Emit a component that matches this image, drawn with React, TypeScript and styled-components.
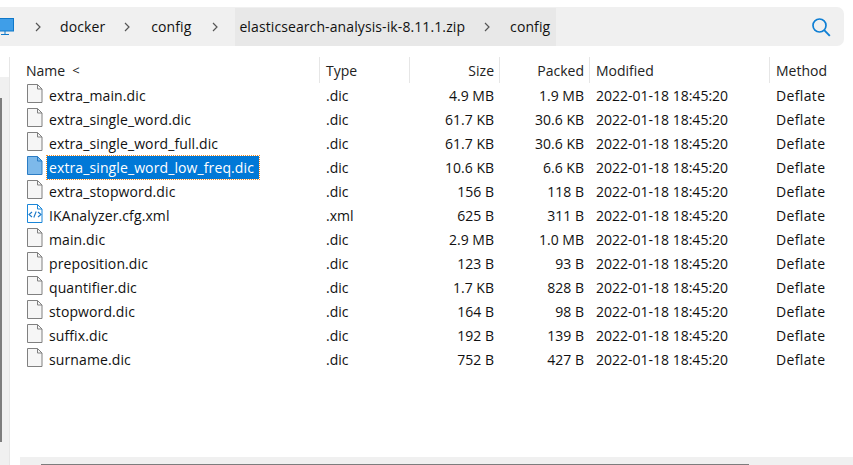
import React from "react";
import styled, { createGlobalStyle } from "styled-components";

const GlobalStyle = createGlobalStyle`
  html, body {
    margin: 0;
    padding: 0;
    background: #fff;
    overflow: hidden;
  }
`;

const Window = styled.div`
  width: 853px;
  height: 465px;
  display: flex;
  flex-direction: column;
  overflow: hidden;
  color: #111;
  font-family: "Open Sans", "Noto Sans", sans-serif;
  font-size: 14px;
`;

const AddressBar = styled.div`
  flex: none;
  width: 844px;
  height: 39px;
  margin-top: 7px;
  display: flex;
  align-items: center;
  background: #f0f0f0;
  border-radius: 0 7px 7px 0;
  overflow: hidden;
`;

const PcIcon = styled.svg`
  flex: none;
  margin-left: -4px;
`;

const Crumb = styled.span`
  white-space: nowrap;
  letter-spacing: 0.1px;
`;

const Chevron = styled.svg<{ $left: number; $right: number }>`
  flex: none;
  margin-left: ${({ $left }) => $left}px;
  margin-right: ${({ $right }) => $right}px;
`;

const ActiveCrumbs = styled.div`
  height: 38px;
  display: flex;
  align-items: center;
  padding: 0 6px 0 4px;
  background: #e8e8e8;
`;

const SearchButton = styled.svg`
  flex: none;
  margin-left: auto;
  margin-right: 13px;
`;

const Body = styled.div`
  flex: 1;
  display: flex;
  margin-top: 11px;
  min-height: 0;
`;

const Sidebar = styled.div`
  flex: none;
  width: 9px;
  padding-top: 20px;
  border-right: 1px solid #e6e6e6;
`;

const SideTrack = styled.div`
  height: 100%;
  padding-top: 21px;
  background: #f0f0f0;
`;

const SideThumb = styled.div`
  width: 2px;
  height: 344px;
  background: #7d7d7d;
`;

const Main = styled.div`
  flex: 1;
  min-width: 0;
  display: flex;
  flex-direction: column;
`;

const List = styled.div`
  flex: 1;
`;

const columns = "310px 90px 90px 90px 180px 83px";

const HeaderRow = styled.div`
  display: grid;
  grid-template-columns: ${columns};
  height: 26px;
`;

const HeaderCell = styled.div<{ $right?: boolean; $first?: boolean }>`
  display: flex;
  align-items: center;
  justify-content: ${({ $right }) => ($right ? "flex-end" : "flex-start")};
  padding: ${({ $first, $right }) =>
    $first ? "0 0 0 16px" : $right ? "0 5px 0 0" : "0 0 0 6px"};
  border-right: 1px solid #e6e6e6;
  color: #222;
  &:last-child {
    border-right: none;
  }
`;

const SortMark = styled.span`
  margin-left: 7px;
  font-size: 13px;
`;

const Row = styled.div`
  display: grid;
  grid-template-columns: ${columns};
  height: 24px;
  align-items: center;
`;

const NameCell = styled.div`
  display: flex;
  align-items: center;
  padding-left: 17px;
`;

const IconSvg = styled.svg`
  flex: none;
  margin-bottom: 4px;
`;

const FileName = styled.span<{ $selected?: boolean }>`
  margin-left: ${({ $selected }) => ($selected ? "4px" : "6px")};
  padding: ${({ $selected }) => ($selected ? "0 5px 0 2px" : "0")};
  height: ${({ $selected }) => ($selected ? "23px" : "auto")};
  line-height: ${({ $selected }) => ($selected ? "23px" : "normal")};
  white-space: nowrap;
  letter-spacing: 0.11px;
  color: ${({ $selected }) => ($selected ? "#fff" : "inherit")};
  background: ${({ $selected }) => ($selected ? "#0078d7" : "transparent")};
  outline: ${({ $selected }) => ($selected ? "1px dotted #f08a24" : "none")};
`;

const Cell = styled.div<{ $right?: boolean; $wide?: boolean }>`
  padding: ${({ $right }) => ($right ? "0 6px 0 0" : "0 0 0 6px")};
  text-align: ${({ $right }) => ($right ? "right" : "left")};
  white-space: nowrap;
  letter-spacing: ${({ $wide }) => ($wide ? "0.35px" : "normal")};
`;

const BottomTrack = styled.div`
  flex: none;
  height: 8px;
  margin-left: 10px;
  padding: 7px 0 0 21px;
  box-sizing: border-box;
  background: #f0f0f0;
`;

const BottomThumb = styled.div`
  width: 708px;
  height: 1px;
  background: #7d7d7d;
`;

type FileKind = "plain" | "selected" | "xml";

const FileIcon = ({ kind }: { kind: FileKind }) => {
  const stroke = kind === "plain" ? "#808080" : kind === "selected" ? "#2b7cc4" : "#1a86d8";
  const fill = kind === "plain" ? "#f6f6f6" : kind === "selected" ? "#7db9ea" : "#fff";
  return (
    <IconSvg width="16" height="19" viewBox="0 0 16 19">
      <path
        d="M.5 .5h10l4.5 4.5v13.5H.5z"
        fill={fill}
        stroke={stroke}
        strokeWidth="1"
      />
      <path d="M10.5 .5v4.5H15" fill="none" stroke={stroke} strokeWidth="1" />
      {kind === "xml" && (
        <path
          d="M5 8 2 10.5 5 13M11 8l3 2.5-3 2.5M9.2 7.5l-2.4 6"
          fill="none"
          stroke="#1a78c8"
          strokeWidth="1.1"
        />
      )}
    </IconSvg>
  );
};

const ChevronIcon = ({ left, right }: { left: number; right: number }) => (
  <Chevron $left={left} $right={right} width="6" height="10" viewBox="0 0 6 10">
    <path d="M1 1l4 4-4 4" fill="none" stroke="#555" strokeWidth="1.2" />
  </Chevron>
);

type FileRow = {
  name: string;
  type: string;
  size: string;
  packed: string;
  kind?: FileKind;
};

const files: FileRow[] = [
  { name: "extra_main.dic", type: ".dic", size: "4.9 MB", packed: "1.9 MB" },
  { name: "extra_single_word.dic", type: ".dic", size: "61.7 KB", packed: "30.6 KB" },
  { name: "extra_single_word_full.dic", type: ".dic", size: "61.7 KB", packed: "30.6 KB" },
  { name: "extra_single_word_low_freq.dic", type: ".dic", size: "10.6 KB", packed: "6.6 KB", kind: "selected" },
  { name: "extra_stopword.dic", type: ".dic", size: "156 B", packed: "118 B" },
  { name: "IKAnalyzer.cfg.xml", type: ".xml", size: "625 B", packed: "311 B", kind: "xml" },
  { name: "main.dic", type: ".dic", size: "2.9 MB", packed: "1.0 MB" },
  { name: "preposition.dic", type: ".dic", size: "123 B", packed: "93 B" },
  { name: "quantifier.dic", type: ".dic", size: "1.7 KB", packed: "828 B" },
  { name: "stopword.dic", type: ".dic", size: "164 B", packed: "98 B" },
  { name: "suffix.dic", type: ".dic", size: "192 B", packed: "139 B" },
  { name: "surname.dic", type: ".dic", size: "752 B", packed: "427 B" },
];

export default function App() {
  return (
    <Window>
      <GlobalStyle />
      <AddressBar>
        <PcIcon width="18" height="17" viewBox="0 0 18 17">
          <rect x=".5" y=".5" width="17" height="12.5" fill="#3f9ee8" stroke="#0f78c9" />
          <path d="M9 13v3M5 16.5h8" stroke="#0f78c9" strokeWidth="1" fill="none" />
        </PcIcon>
        <ChevronIcon left={21} right={19} />
        <Crumb>docker</Crumb>
        <ChevronIcon left={19} right={21} />
        <Crumb>config</Crumb>
        <ChevronIcon left={21} right={17} />
        <ActiveCrumbs>
          <Crumb>elasticsearch-analysis-ik-8.11.1.zip</Crumb>
          <ChevronIcon left={19} right={20} />
          <Crumb>config</Crumb>
        </ActiveCrumbs>
        <SearchButton width="20" height="20" viewBox="0 0 20 20">
          <circle cx="8.5" cy="8.5" r="6.5" fill="none" stroke="#0f7fd4" strokeWidth="1.7" />
          <path d="M13.2 13.2l5.6 5.6" stroke="#0f7fd4" strokeWidth="1.9" />
        </SearchButton>
      </AddressBar>
      <Body>
        <Sidebar>
          <SideTrack>
            <SideThumb />
          </SideTrack>
        </Sidebar>
        <Main>
          <List>
            <HeaderRow>
              <HeaderCell $first>
                Name<SortMark>&lt;</SortMark>
              </HeaderCell>
              <HeaderCell>Type</HeaderCell>
              <HeaderCell $right>Size</HeaderCell>
              <HeaderCell $right>Packed</HeaderCell>
              <HeaderCell>Modified</HeaderCell>
              <HeaderCell>Method</HeaderCell>
            </HeaderRow>
            {files.map((file) => (
              <Row key={file.name}>
                <NameCell>
                  <FileIcon kind={file.kind ?? "plain"} />
                  <FileName $selected={file.kind === "selected"}>{file.name}</FileName>
                </NameCell>
                <Cell>{file.type}</Cell>
                <Cell $right>{file.size}</Cell>
                <Cell $right>{file.packed}</Cell>
                <Cell>2022-01-18 18:45:20</Cell>
                <Cell $wide>Deflate</Cell>
              </Row>
            ))}
          </List>
          <BottomTrack>
            <BottomThumb />
          </BottomTrack>
        </Main>
      </Body>
    </Window>
  );
}
